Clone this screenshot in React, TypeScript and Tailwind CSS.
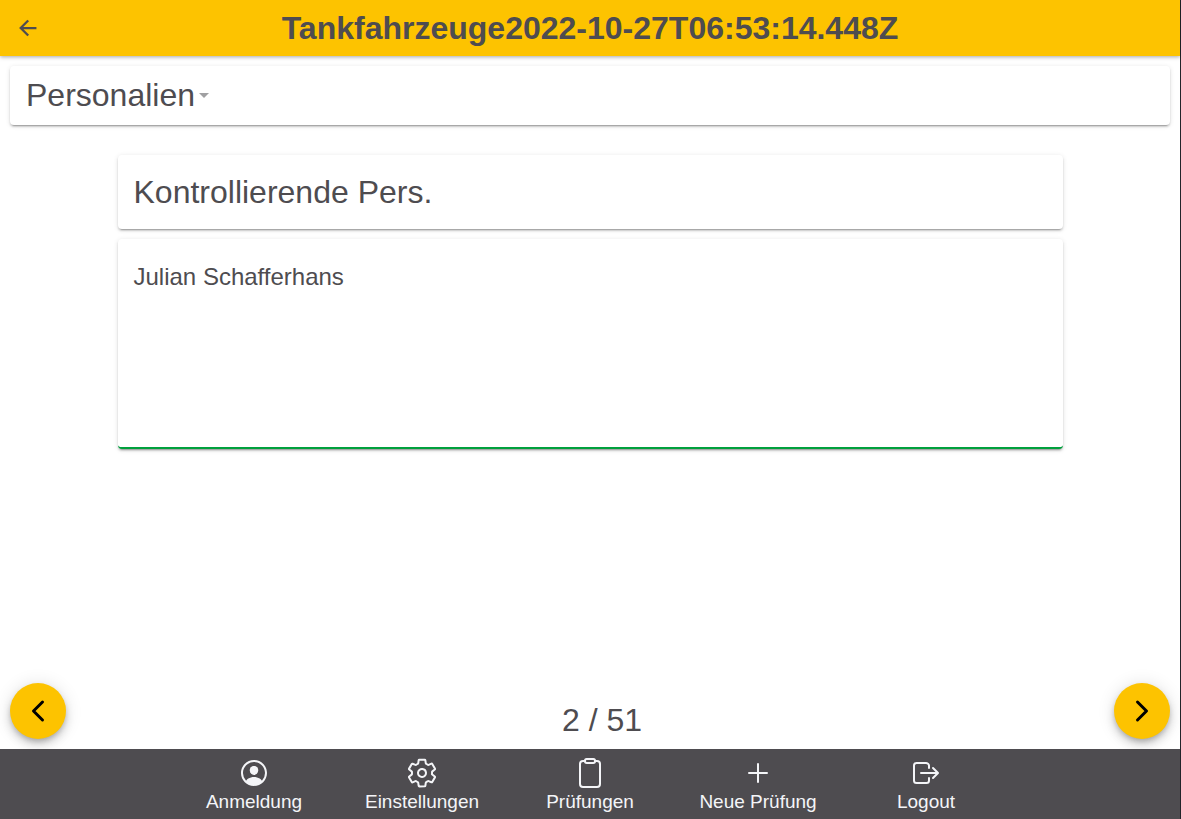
import { useState } from "react";
import type { ReactNode } from "react";
import {
  IoAdd,
  IoArrowBackSharp,
  IoChevronBack,
  IoChevronForward,
  IoClipboardOutline,
  IoLogOutOutline,
  IoPersonCircleOutline,
  IoSettingsOutline,
} from "react-icons/io5";

const CARD =
  "rounded-sm bg-white shadow-[0_3px_1px_-2px_rgba(0,0,0,0.2),0_2px_2px_0_rgba(0,0,0,0.14),0_1px_5px_0_rgba(0,0,0,0.12)]";

function Tab({ icon, label }: { icon: ReactNode; label: string }) {
  return (
    <a
      href="#"
      className="flex max-w-[168px] flex-1 flex-col items-center pt-2 text-[19px] leading-[26px] text-[#f4f5f8]"
    >
      <span className="flex h-8 items-center text-[32px]" aria-hidden="true">
        {icon}
      </span>
      <span className="whitespace-nowrap">{label}</span>
    </a>
  );
}

function RoundButton({ label, children }: { label: string; children: ReactNode }) {
  return (
    <button
      type="button"
      aria-label={label}
      className="flex size-14 shrink-0 items-center justify-center rounded-full bg-[#fdc300] text-[32px] text-black shadow-[0_3px_5px_-1px_rgba(0,0,0,0.2),0_6px_10px_0_rgba(0,0,0,0.14),0_1px_18px_0_rgba(0,0,0,0.12)]"
    >
      {children}
    </button>
  );
}

export default function App() {
  const [person, setPerson] = useState("Julian Schafferhans");

  return (
    <div className="flex min-h-screen flex-col border-r border-[#22252a] bg-white font-['Liberation_Sans',Arial,sans-serif] text-[#4e4c50]">
      <header className="flex h-14 shrink-0 items-center bg-[#fdc300] px-4 shadow-[0_1px_4px_0_rgba(0,0,0,0.35)]">
        <button type="button" aria-label="Zurück" className="text-2xl">
          <IoArrowBackSharp />
        </button>
        <h1 className="flex-1 pr-6 text-center text-[32px] leading-10 font-bold">
          Tankfahrzeuge2022-10-27T06:53:14.448Z
        </h1>
      </header>

      <main className="flex flex-1 flex-col p-2.5">
        <div className={`flex h-[59px] items-center px-4 ${CARD}`}>
          <select
            aria-label="Abschnitt"
            className="appearance-none bg-transparent pb-0.5 text-[32px] leading-10 [field-sizing:content]"
          >
            <option>Personalien</option>
          </select>
          <svg viewBox="0 0 10 5" className="ml-1 h-[5px] w-2.5 fill-[#a0a0a2]" aria-hidden="true">
            <path d="M0 0h10L5 5z" />
          </svg>
        </div>

        <div className="mx-auto mt-[30px] flex w-full max-w-[945px] flex-col gap-2.5">
          <div className={`flex h-[74px] items-center px-4 ${CARD}`}>
            <label htmlFor="person" className="text-[32px] leading-10">
              Kontrollierende Pers.
            </label>
          </div>
          <div className={`flex overflow-hidden border-b-2 border-[#00a03c] ${CARD}`}>
            <textarea
              id="person"
              value={person}
              onChange={(event) => setPerson(event.target.value)}
              className="h-52 w-full resize-none px-4 py-6 text-2xl leading-7 outline-none"
            />
          </div>
        </div>

        <div className="mt-auto flex items-end justify-between">
          <RoundButton label="Zurück">
            <IoChevronBack />
          </RoundButton>
          <p className="pl-6 text-[32px] leading-[38px]">2 / 51</p>
          <RoundButton label="Weiter">
            <IoChevronForward />
          </RoundButton>
        </div>
      </main>

      <nav className="flex h-[70px] shrink-0 justify-center bg-[#4e4c50]">
        <Tab icon={<IoPersonCircleOutline />} label="Anmeldung" />
        <Tab icon={<IoSettingsOutline />} label="Einstellungen" />
        <Tab icon={<IoClipboardOutline />} label="Prüfungen" />
        <Tab icon={<IoAdd />} label="Neue Prüfung" />
        <Tab icon={<IoLogOutOutline />} label="Logout" />
      </nav>
    </div>
  );
}
